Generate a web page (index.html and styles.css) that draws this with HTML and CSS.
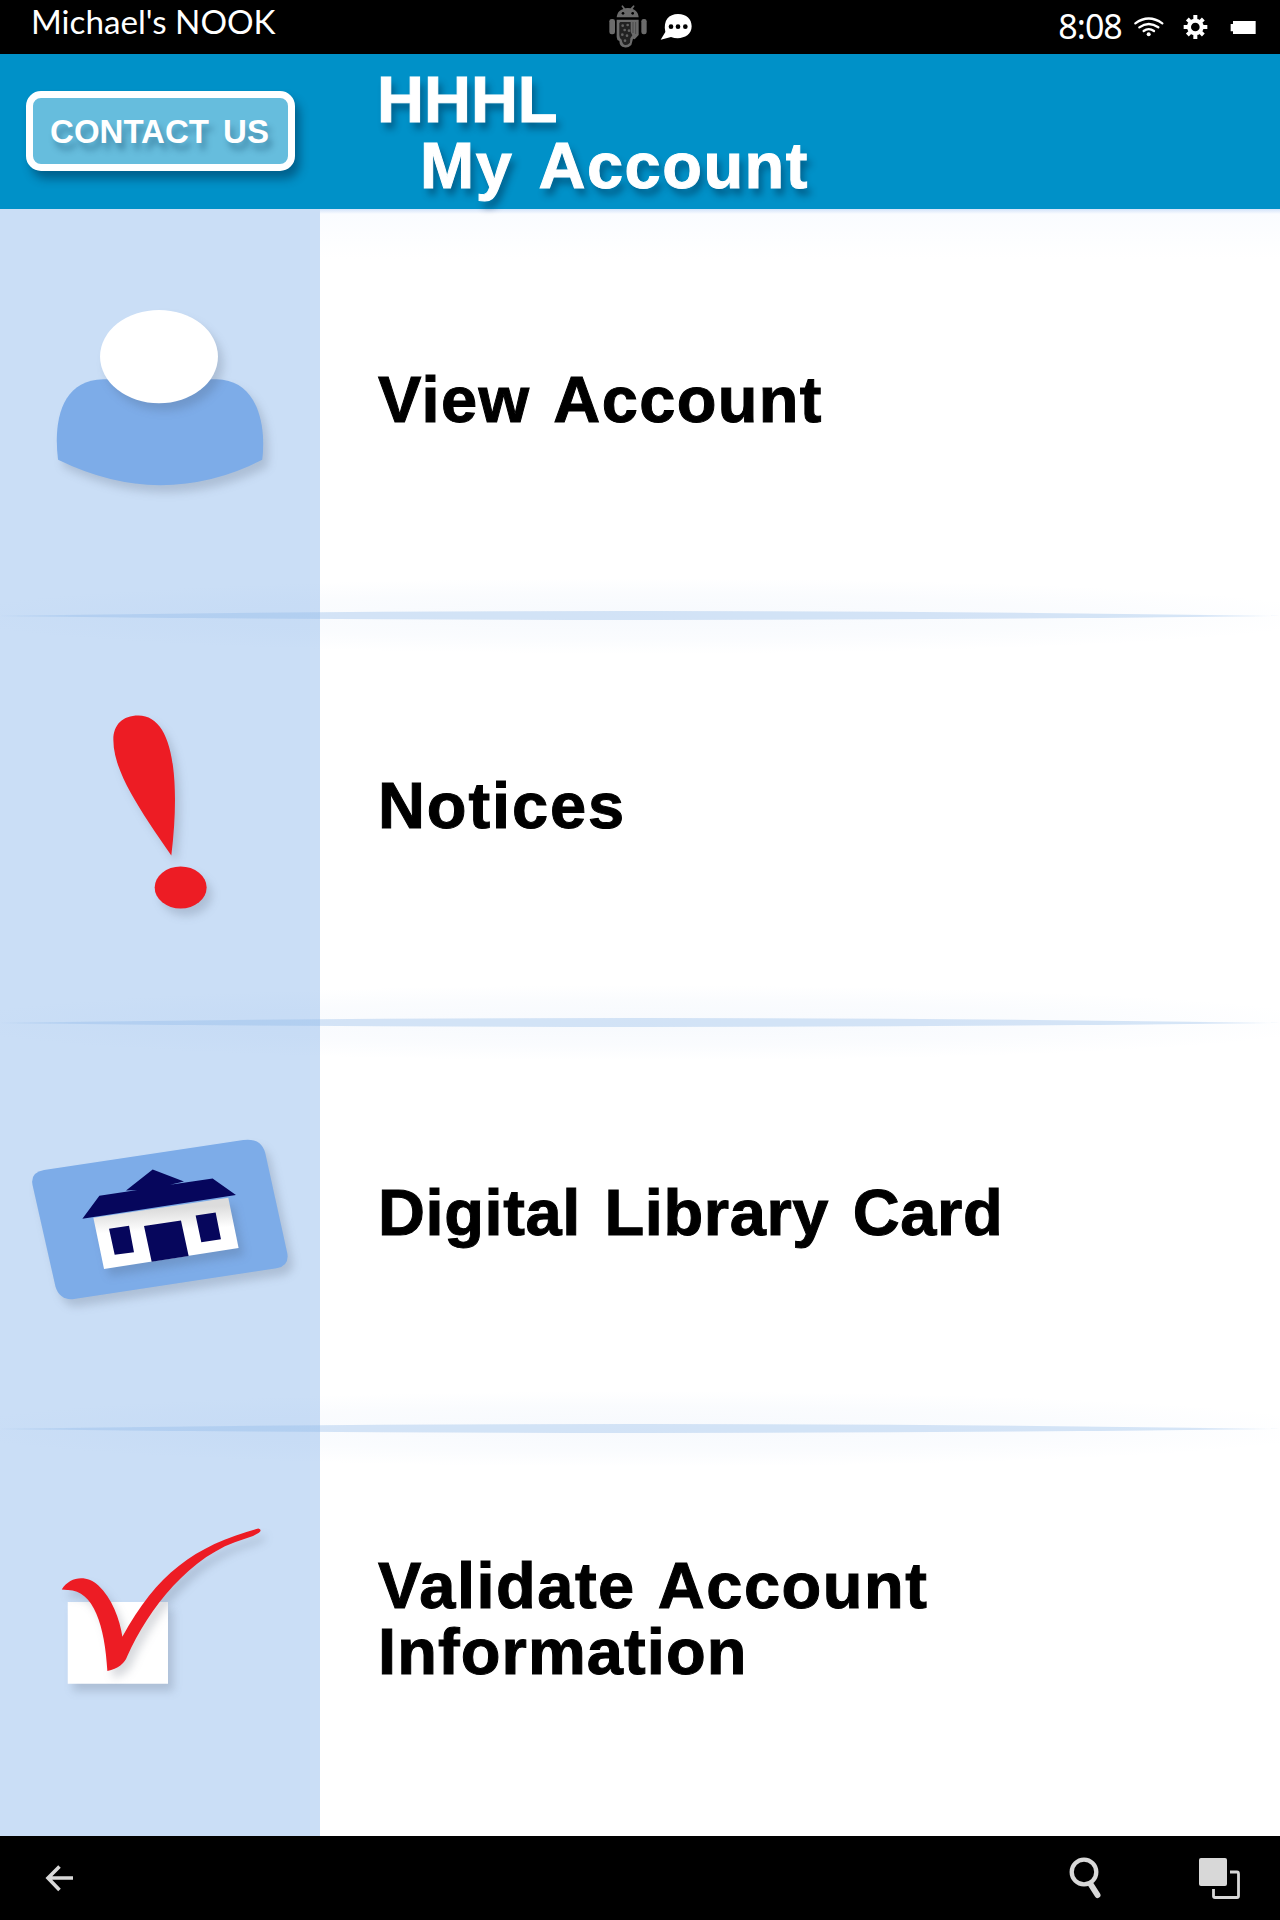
FILE: index.html
```html
<!DOCTYPE html>
<html lang="en">
<head>
<meta charset="utf-8">
<title>My Account</title>
<link rel="stylesheet" href="styles.css">
</head>
<body>
<div class="screen">
  <div class="status">
    <span class="device">Michael's NOOK</span>
    <svg class="notifications" viewBox="0 0 360 162">
      <g fill="#6b6b6b">
        <path d="M80 52C82 36 90 30 100 27L94 18L98 16L105 25Q113 23 122 25L130 16L134 18L128 27C138 31 145 38 146 52Z"/>
        <rect x="58" y="57" width="17" height="46" rx="7"/>
        <rect x="154" y="57" width="16" height="46" rx="7"/>
        <path d="M80 59H146V105L134 118L129 116L124 135Q113 145 103 142Q89 140 88 123Q80 120 80 111Z"/>
      </g>
      <path d="M91 66H122V96L127 106L121 115L120 128Q112 137 105 135Q97 132 95 119Q88 115 88 106V69Z" fill="#222"/>
      <g fill="#626262"><circle cx="98" cy="77" r="4"/><circle cx="113" cy="75" r="4"/><circle cx="104" cy="90" r="4"/><circle cx="117" cy="92" r="4"/><circle cx="97" cy="104" r="4"/><circle cx="111" cy="107" r="4"/><circle cx="105" cy="122" r="4"/></g>
      <path d="M129 66V99M137 66V102" stroke="#4b4b4b" stroke-width="3"/>
      <circle cx="99" cy="40" r="4"/><circle cx="128" cy="40" r="4"/>
      <path d="M212 119L226 96C219 60 237 42 264 42C290 42 305 57 305 79C305 110 270 121 243 111Z" fill="#fff"/>
      <circle cx="243" cy="80" r="7"/><circle cx="264" cy="80" r="7"/><circle cx="286" cy="80" r="7"/>
    </svg>
    <div class="tray">
      <span class="clock">8:08</span>
      <svg class="tray-icons" viewBox="280 0 440 162">
        <g fill="none" stroke="#fff" stroke-width="7" stroke-linecap="round">
          <path d="M287 70Q327 41 368 70M299 82Q327 62 356 82M312 93Q327 82 343 93"/>
          <circle cx="467" cy="81" r="19" stroke-width="12"/>
        </g>
        <circle cx="327" cy="103" r="6" fill="#fff"/>
        <path d="M467 45V58M467 104V117M432 81H445M490 81H503M443 57L451 65M483 97L491 105M443 105L451 97M483 65L491 57" stroke="#fff" stroke-width="12"/>
        <path d="M580 63H648V102H580V94H573V72H580Z" fill="#fff"/>
      </svg>
    </div>
  </div>

  <header class="header">
    <div class="header-side"><button class="contact">CONTACT US</button></div>
    <h1 class="title"><span class="library">HHHL</span><span class="page-name">My Account</span></h1>
  </header>

  <main class="menu">
    <a class="row">
      <svg class="icon" viewBox="0 209 320 407">
        <g transform="translate(0 280) scale(.33333)">
          <path class="shadow" fill="#7dace8" d="M174 540C160 430 180 300 310 298H650C770 300 800 430 787 540Q640 616 480 616Q330 616 174 540Z"/>
          <ellipse class="shadow" fill="#fff" cx="477" cy="230" rx="177" ry="140"/>
        </g>
      </svg>
      <span class="label view">View Account</span>
      <svg class="divider" viewBox="0 0 1280 80" preserveAspectRatio="none"><ellipse cx="640" cy="40" rx="700" ry="38" fill="url(#haze)"/><path d="M0 40Q320 35 640 35Q960 35 1280 40Q960 44 640 44Q320 44 0 40Z"/></svg>
    </a>
    <a class="row">
      <svg class="icon" viewBox="0 616 320 407">
        <g transform="translate(80 690) scale(.33333)" fill="#ed1c24">
          <path class="shadow" d="M100 150C100 104 128 77 175 77C249 77 285 169 285 330Q285 405 274 497C180 360 100 245 100 150Z"/>
          <ellipse class="shadow" cx="302" cy="593" rx="78" ry="63"/>
        </g>
      </svg>
      <span class="label notices">Notices</span>
      <svg class="divider" viewBox="0 0 1280 80" preserveAspectRatio="none"><ellipse cx="640" cy="40" rx="700" ry="38" fill="url(#haze)"/><path d="M0 40Q320 35 640 35Q960 35 1280 40Q960 44 640 44Q320 44 0 40Z"/></svg>
    </a>
    <a class="row">
      <svg class="icon" viewBox="0 1022.5 320 407">
        <defs><linearGradient id="wall" x1="0" y1="0" x2=".1" y2="1"><stop offset=".2" stop-color="#dcdcdc"/><stop offset=".5" stop-color="#fff"/></linearGradient></defs>
        <g transform="translate(0 1110) scale(.33333)">
          <path class="shadow" fill="#7dace8" d="M97 222Q91 186 132 179L730 89Q784 82 796 128L862 428Q869 466 830 474L222 566Q178 571 166 528Z"/>
          <path class="shadow" fill="url(#wall)" d="M280 322L685 262L716 413L312 476Z"/>
          <g fill="#06065c"><path d="M247 325L298 256L412 239L378 240L458 177L552 213L510 223L638 204L708 254Z"/><path d="M327 355L387 346L402 426L344 433ZM432 347L543 330L566 437L455 454ZM587 315L647 306L663 387L604 396Z"/></g>
        </g>
      </svg>
      <span class="label card">Digital Library Card</span>
      <svg class="divider" viewBox="0 0 1280 80" preserveAspectRatio="none"><ellipse cx="640" cy="40" rx="700" ry="38" fill="url(#haze)"/><path d="M0 40Q320 35 640 35Q960 35 1280 40Q960 44 640 44Q320 44 0 40Z"/></svg>
    </a>
    <a class="row">
      <svg class="icon" viewBox="0 1429 320 407">
        <g transform="translate(40 1509.500) scale(.33333)">
          <path class="shadow" fill="#fff" d="M83 278H384V523H83Z"/>
          <path class="shadow" fill="#ed1c24" d="M65 240C90 200 140 195 175 228C215 265 240 330 247 382C350 195 460 110 655 57Q668 60 657 70Q640 82 615 88C450 135 325 300 262 440Q250 474 202 485C195 350 160 240 82 242Z"/>
        </g>
      </svg>
      <span class="label validate">Validate Account<br><span class="second">Information</span></span>
    </a>
  </main>

  <nav class="nav">
    <svg viewBox="0 1836 1280 84">
      <defs><radialGradient id="haze"><stop offset="0" stop-color="#86aee6" stop-opacity=".07"/><stop offset=".6" stop-color="#86aee6" stop-opacity=".04"/><stop offset="1" stop-color="#86aee6" stop-opacity="0"/></radialGradient></defs>
      <g fill="none" stroke="#d8d8d8">
        <path d="M73 1878H48M59.500 1866.500L48 1878L59.500 1890" stroke-width="3.600"/>
        <circle cx="1084" cy="1872" r="12.300" stroke-width="4.300"/>
        <path d="M1090.500 1884L1097.500 1895" stroke-width="6" stroke-linecap="round"/>
        <path d="M1230 1872H1237Q1238.500 1872 1238.500 1874V1896Q1238.500 1897.500 1237 1897.500H1215Q1213.500 1897.500 1213.500 1896V1889" stroke-width="2.800"/>
      </g>
      <rect x="1199" y="1858" width="28" height="28" rx="2" fill="#d8d8d8"/>
    </svg>
  </nav>
</div>
</body>
</html>
```
FILE: styles.css
```css
body { margin: 0; background: #000; }
.screen { width: 1280px; height: 1920px; display: grid; grid-template-rows: 54px 155px 1627px 84px; overflow: hidden; font-family: "Liberation Sans", Arial, sans-serif; }
svg { display: block; }

.status { display: grid; grid-template-columns: 590px 120px 1fr; background: #000; color: #fff; }
.device { padding-left: 31px; font: 33.2px/43px Lato, sans-serif; white-space: nowrap; }
.notifications { width: 120px; height: 54px; }
.tray { display: flex; justify-content: flex-end; }
.clock { font: 34px/53px "Noto Sans", sans-serif; letter-spacing: -1px; width: 75px; }
.tray-icons { width: 146.667px; height: 54px; }

.header { display: grid; grid-template-columns: 320px 1fr; background: #0091c8; color: #fff; position: relative; z-index: 1; }
.header-side { padding: 37px 0 0 26px; }
.contact { box-sizing: border-box; width: 269px; height: 80px; padding: 0 2px 0 0; border: 7px solid #fff; border-radius: 15px; background: #66bddd; color: #fff; font: bold 33px/68px "Liberation Sans", Arial, sans-serif; word-spacing: 5px; text-shadow: 4px 7px 6px rgba(0, 50, 80, .35); box-shadow: 5px 8px 10px rgba(0, 30, 60, .42); white-space: nowrap; }
.title { margin: 0; padding: 13px 0 0 57px; font-size: 65px; line-height: 66px; text-shadow: 4px 7px 7px rgba(0, 30, 60, .42); -webkit-text-stroke: 1px currentColor; }
.title span { display: block; }
.library { letter-spacing: 0; }
.page-name { padding-left: 43px; letter-spacing: 1.5px; word-spacing: 8px; }

.menu { display: grid; grid-template-rows: repeat(4, 406.75px); overflow: hidden; background: linear-gradient(#d3e3fa, #fafcff 5px, #fff 50px); }
.row { position: relative; display: grid; grid-template-columns: 320px 1fr; grid-template-rows: 406.75px; align-items: center; color: #000; }
.icon { width: 320px; height: 406.75px; background: #cadef6; }
.shadow { filter: drop-shadow(16px 22px 13px rgba(60, 70, 90, .2)); }
.label { padding: 0 0 25px 58px; font-size: 65px; line-height: 66.3px; font-weight: bold; letter-spacing: 1.5px; white-space: nowrap; -webkit-text-stroke: 1px currentColor; }
.view { letter-spacing: 1.35px; word-spacing: 6px; }
.notices { letter-spacing: 1.9px; }
.card { letter-spacing: .6px; word-spacing: 5px; }
.validate { padding-bottom: 27px; word-spacing: 5px; }
.second { letter-spacing: 1.1px; }
.divider { position: absolute; left: 0; bottom: -40px; width: 1280px; height: 80px; z-index: 1; }
.divider path { fill: #8ab7e8; opacity: .34; }
.nav { background: #000; }
```
